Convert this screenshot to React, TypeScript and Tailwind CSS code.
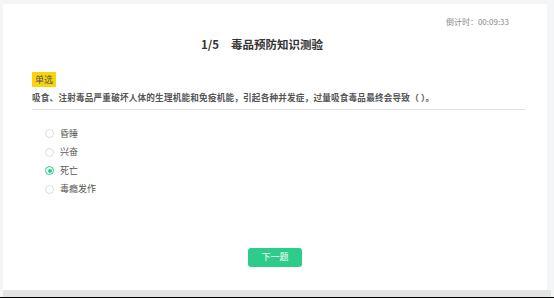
import React from "react";

const options = ["昏睡", "兴奋", "死亡", "毒瘾发作"];

export default function App() {
  const selected = 2;
  return (
    <div
      className="w-[554px] h-[298px] bg-[#f4f5f6] flex flex-col overflow-hidden"
      style={{ fontFamily: '"Noto Sans CJK SC", "Noto Sans", sans-serif' }}
    >
      <div className="flex-1 mt-[4px] ml-[3px] mr-[7px] bg-white flex flex-col">
        <div className="flex justify-end pr-[38px] pt-[12px] text-[8px] leading-[12px] text-[#888]">
          倒计时：00:09:33
        </div>
        <div className="flex justify-center pr-[26px] mt-[7px] text-[11.5px] leading-[18px] font-bold text-[#333]">
          <span className="mr-[12px]">1/5</span>
          <span>毒品预防知识测验</span>
        </div>
        <div className="ml-[29px] mr-[22px] mt-[11px]">
          <div className="inline-flex items-center bg-[#f7d40c] px-[3px] h-[15px] text-[9px] text-[#555]">
            单选
          </div>
          <div className="mt-[3px] pb-[5px] border-b border-[#e2e2e2] text-[8.6px] leading-[13px] font-bold text-[#555] tracking-[0.2px]">
            吸食、注射毒品严重破坏人体的生理机能和免疫机能，引起各种并发症，过量吸食毒品最终会导致（ ）。
          </div>
        </div>
        <div className="ml-[42px] mt-[17px] flex flex-col gap-[5.5px]">
          {options.map((o, i) => (
            <div key={o} className="flex items-center h-[13px]">
              <span
                className={
                  i === selected
                    ? "w-[9px] h-[9px] rounded-full border border-[#2fca8a] flex items-center justify-center"
                    : "w-[9px] h-[9px] rounded-full border border-[#dcdcdc]"
                }
              >
                {i === selected && <span className="w-[4px] h-[4px] rounded-full bg-[#2fca8a]" />}
              </span>
              <span className="ml-[6px] text-[9px] text-[#555]">{o}</span>
            </div>
          ))}
        </div>
        <div className="flex justify-center mt-[52px]">
          <div className="w-[54px] h-[19px] rounded-[3px] bg-[#2ecc8a] text-white text-[9px] flex items-center justify-center">
            下一题
          </div>
        </div>
      </div>
      <div className="h-[7px] mx-[3px] bg-[#e4e4e4]" />
      <div className="h-[1px] bg-black" />
    </div>
  );
}
